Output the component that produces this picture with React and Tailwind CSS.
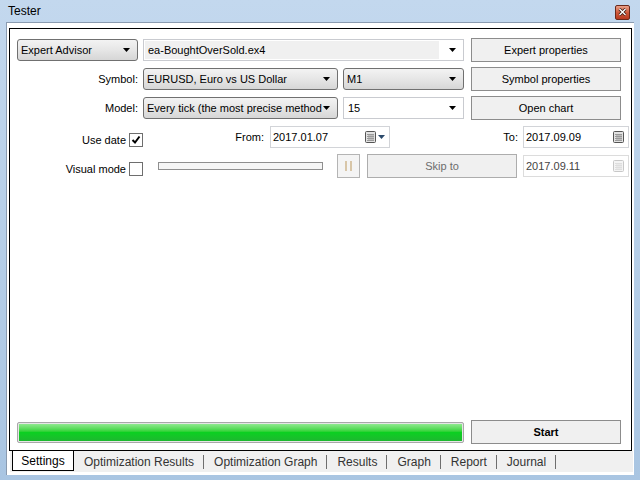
import React from "react";

const ui = { fontFamily: '"Liberation Sans", Arial, sans-serif' };

function Arrow({ color = "#000" }) {
  return (
    <svg width="7" height="4" viewBox="0 0 7 4" className="shrink-0">
      <path d="M0 0h7L3.5 4z" fill={color} />
    </svg>
  );
}

function Calendar({ faded = false }) {
  return (
    <svg width="11" height="12" viewBox="0 0 11 12" className="shrink-0">
      <rect x="0.5" y="0.5" width="10" height="11" rx="1" fill={faded ? "#f4f4f4" : "#e2e2e2"} stroke={faded ? "#c8c8c8" : "#555"} />
      <g stroke={faded ? "#dedede" : "#9a9a9a"} strokeWidth="1">
        <path d="M2 3.5h7M2 5.5h7M2 7.5h7M2 9.5h7" />
        <path d="M4 3v7M6 3v7M8 3v7" />
      </g>
    </svg>
  );
}

function Check() {
  return (
    <svg width="10" height="10" viewBox="0 0 10 10">
      <path d="M1.5 5l2.5 2.5L8.5 1.5" fill="none" stroke="#000" strokeWidth="2" />
    </svg>
  );
}

// gray drop-down list (not editable)
function ListBox({ w, text }) {
  return (
    <div className={`${w} h-[22px] flex items-center rounded-[3px] border border-[#707070] bg-linear-to-b from-[#f3f3f3] via-[#e6e6e6] to-[#d6d6d6] pl-[3px] pr-[7px]`}>
      <span className="flex-1 overflow-hidden whitespace-nowrap">{text}</span>
      <Arrow />
    </div>
  );
}

// editable combo box
function EditBox({ w, text, gray = false }) {
  return (
    <div className={`${w} h-[22px] flex items-center border border-[#c9cbd0] bg-white pl-[1px] pr-[7px]`}>
      <div className={`flex-1 h-[18px] flex items-center pl-[3px] mr-[10px] ${gray ? "bg-[#f0f0f0]" : ""}`}>{text}</div>
      <Arrow />
    </div>
  );
}

function Button({ w, children, bold = false, dim = false }) {
  return (
    <div className={`${w} h-[24px] flex items-center justify-center border border-[#8c8c8c] bg-[#f0f0f0] ${bold ? "font-bold" : ""} ${dim ? "text-[#6d6d6d] border-[#adadad]" : ""}`}>
      {children}
    </div>
  );
}

function DateBox({ w, text, from = false, disabled = false }) {
  return (
    <div className={`${w} h-[22px] flex items-center border ${disabled ? "border-[#dcdcdc] text-[#444]" : "border-[#d2d4d8]"} bg-white pl-[2px] pr-[4px]`}>
      <span className="flex-1">{text}</span>
      <Calendar faded={disabled} />
      {from && <span className="ml-[2px]"><Arrow color="#2b4a6b" /></span>}
    </div>
  );
}

function Label({ w, low = false, children }) {
  return <div className={`${w} ${low ? "mt-[6px]" : ""} text-right whitespace-nowrap`}>{children}</div>;
}

function CheckBox({ checked }) {
  return (
    <div className="ml-[3px] mt-[6px] w-[14px] h-[14px] border border-[#6e6e6e] bg-white flex items-center justify-center">
      {checked && <Check />}
    </div>
  );
}

const tabs = ["Optimization Results", "Optimization Graph", "Results", "Graph", "Report", "Journal"];

export default function App() {
  return (
    <div className="w-[640px] h-[480px] flex flex-col bg-linear-to-b from-[#c3d8ee] to-[#a9c5e2] text-[11px] text-black" style={ui}>
      {/* title bar */}
      <div className="h-[22px] flex items-center pl-[8px] pr-[10px]">
        <span className="flex-1 text-[12px]">Tester</span>
        <div className="w-[15px] h-[15px] mt-[2px] rounded-[2px] border border-[#6a2a1c] bg-linear-to-b from-[#e9a18a] via-[#cf5a3c] to-[#b8391f] flex items-center justify-center">
          <svg width="9" height="8" viewBox="0 0 9 8">
            <path d="M1.5 1l6 6M7.5 1l-6 6" stroke="#3a1a12" strokeWidth="3" />
            <path d="M1.5 1l6 6M7.5 1l-6 6" stroke="#fff" strokeWidth="1.4" />
          </svg>
        </div>
      </div>

      {/* client area */}
      <div className="ml-[6px] mr-[6px] h-[453px] flex flex-col bg-white border-l border-t border-[#8a9bb0] border-r-black border-b-black">
        <div className="mt-[5px] mx-[2px] h-[423px] flex flex-col justify-between border border-black pl-[7px]">
          <div className="pt-[9px] flex flex-col gap-[5px]">
            <div className="h-[24px] flex items-center">
              <ListBox w="w-[121px]" text="Expert Advisor" />
              <div className="ml-[5px]"><EditBox w="w-[321px]" text="ea-BoughtOverSold.ex4" gray /></div>
              <div className="ml-[7px]"><Button w="w-[150px]">Expert properties</Button></div>
            </div>
            <div className="h-[24px] flex items-center">
              <Label w="w-[121px]">Symbol:</Label>
              <div className="ml-[5px]"><ListBox w="w-[195px]" text="EURUSD, Euro vs US Dollar" /></div>
              <div className="ml-[5px]"><ListBox w="w-[121px]" text="M1" /></div>
              <div className="ml-[7px]"><Button w="w-[150px]">Symbol properties</Button></div>
            </div>
            <div className="h-[24px] flex items-center">
              <Label w="w-[121px]">Model:</Label>
              <div className="ml-[5px]"><ListBox w="w-[195px]" text="Every tick (the most precise method" /></div>
              <div className="ml-[5px]"><EditBox w="w-[121px]" text="15" /></div>
              <div className="ml-[7px]"><Button w="w-[150px]">Open chart</Button></div>
            </div>
            <div className="h-[24px] flex items-center">
              <Label w="w-[109px]" low>Use date</Label>
              <CheckBox checked />
              <Label w="w-[121px]">From:</Label>
              <div className="ml-[6px]"><DateBox w="w-[120px]" text="2017.01.07" from /></div>
              <Label w="w-[128px]">To:</Label>
              <div className="ml-[5px]"><DateBox w="w-[106px]" text="2017.09.09" /></div>
            </div>
            <div className="h-[24px] flex items-center">
              <Label w="w-[109px]" low>Visual mode</Label>
              <CheckBox />
              <div className="ml-[15px] w-[165px] h-[8px] border border-[#8f8f8f] bg-[#f6f6f6]" />
              <div className="ml-[14px] w-[23px] h-[24px] border border-[#b4b4b4] bg-[#f4f4f4] flex items-center justify-center gap-[3px]">
                <div className="w-[2px] h-[10px] bg-[#d8c6a8]" />
                <div className="w-[2px] h-[10px] bg-[#d8c6a8]" />
              </div>
              <div className="ml-[7px]"><Button w="w-[150px]" dim>Skip to</Button></div>
              <div className="ml-[6px]"><DateBox w="w-[106px]" text="2017.09.11" disabled /></div>
            </div>
          </div>

          {/* progress + start */}
          <div className="mb-[6px] flex items-center">
            <div className="w-[447px] h-[21px] rounded-[2px] border border-[#a8a8a8] p-px bg-[#e6e6e6]">
              <div className="w-full h-full bg-linear-to-b from-[#8ee98e] via-[#0bd021] to-[#1cb82f]" />
            </div>
            <div className="ml-[7px]"><Button w="w-[150px]" bold>Start</Button></div>
          </div>
        </div>

        {/* tab strip */}
        <div className="ml-[3px] mr-px h-[21px] flex bg-[#f0f0f0] text-[12px]">
          <div className="ml-[2px] w-[62px] h-[20px] flex items-center justify-center bg-white border-l border-r border-b border-black">Settings</div>
          <div className="flex items-center">
            {tabs.map((t) => (
              <React.Fragment key={t}>
                <span className="pl-[10px] pr-[9px] text-[#333]">{t}</span>
                <span className="w-px h-[14px] bg-[#6e6e6e]" />
              </React.Fragment>
            ))}
          </div>
        </div>
      </div>
    </div>
  );
}
